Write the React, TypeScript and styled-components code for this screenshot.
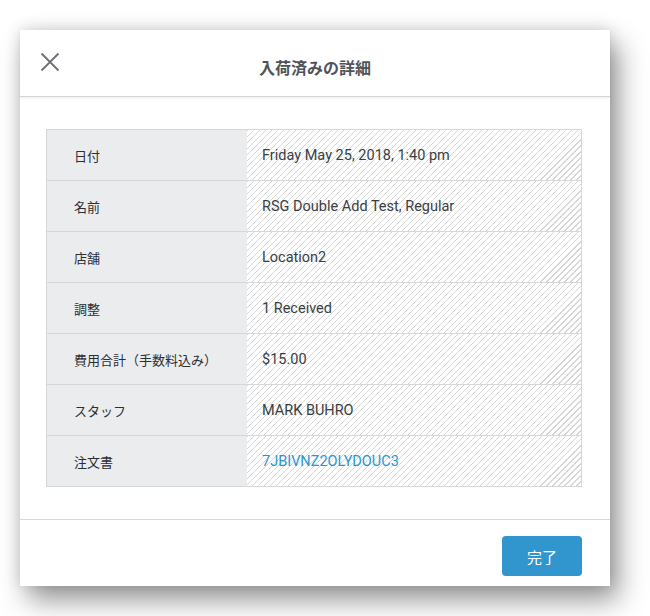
import React from "react";
import styled, { createGlobalStyle } from "styled-components";

const rows = [
    { label: "日付", value: "Friday May 25, 2018, 1:40 pm" },
    { label: "名前", value: "RSG Double Add Test, Regular" },
    { label: "店舗", value: "Location2" },
    { label: "調整", value: "1 Received" },
    { label: "費用合計（手数料込み）", value: "$15.00" },
    { label: "スタッフ", value: "MARK BUHRO" },
    { label: "注文書", value: "7JBIVNZ2OLYDOUC3", link: true },
];

const App = () => {
    return (
        <>
            <GlobalStyle/>
            <Page>
                <Modal>
                    <Header>
                        <CloseButton aria-label="close">
                            <svg width="20" height="20" viewBox="0 0 20 20">
                                <path d="M1.5 1.5 L18.5 18.5 M18.5 1.5 L1.5 18.5" stroke="#6b6f75" strokeWidth="1.8" fill="none"/>
                            </svg>
                        </CloseButton>
                        <Title>入荷済みの詳細</Title>
                    </Header>
                    <Body>
                        <Table>
                            {rows.map((row, i) => (
                                <Row key={row.label} last={i === rows.length - 1}>
                                    <Label>{row.label}</Label>
                                    <Value link={row.link}>{row.value}</Value>
                                </Row>
                            ))}
                        </Table>
                    </Body>
                    <Footer>
                        <DoneButton>完了</DoneButton>
                    </Footer>
                </Modal>
            </Page>
        </>
    )
};
export default App;

const GlobalStyle = createGlobalStyle`
  body {
    margin: 0;
    background: #ffffff;
    font-family: Roboto, "Noto Sans CJK JP", sans-serif;
  }
`;
const Page = styled.div`
    width: 650px;
    height: 616px;
    padding: 30px 0 0 20px;
    box-sizing: border-box;
`;
const Modal = styled.div`
    width: 590px;
    height: 556px;
    background: #fff;
    display: flex;
    flex-direction: column;
    box-shadow: 8px 14px 26px rgba(0, 0, 0, 0.42), 0 -2px 14px rgba(0, 0, 0, 0.12);
`;
const Header = styled.div`
    height: 67px;
    box-sizing: border-box;
    border-bottom: 1px solid #d3d5d8;
    box-shadow: 0 1px 2px rgba(0, 0, 0, 0.08);
    display: flex;
    align-items: center;
    justify-content: center;
    position: relative;
`;
const CloseButton = styled.button`
    position: absolute;
    left: 20px;
    top: 22px;
    width: 20px;
    height: 20px;
    padding: 0;
    border: none;
    background: none;
    display: flex;
`;
const Title = styled.div`
    font-family: "Noto Sans CJK JP", sans-serif;
    font-size: 16px;
    font-weight: 700;
    color: #4f545a;
    margin-top: 8px;
`;
const Body = styled.div`
    flex: 1;
    padding: 32px 28px 0 26px;
    border-bottom: 1px solid #d8dadd;
`;
const Table = styled.div`
    border: 1px solid #d5d7da;
`;
const Row = styled.div<{ last?: boolean }>`
    display: grid;
    grid-template-columns: 200px 1fr;
    height: 50px;
    border-bottom: ${p => p.last ? "none" : "1px solid #d5d7da"};
`;
const Label = styled.div`
    background: #ebecee;
    display: flex;
    align-items: center;
    padding-left: 27px;
    font-family: "Noto Sans CJK JP", sans-serif;
    font-size: 13px;
    color: #2b2e33;
`;
const Value = styled.div<{ link?: boolean }>`
    display: flex;
    align-items: center;
    padding-left: 15px;
    font-family: Roboto, "Noto Sans CJK JP", sans-serif;
    font-size: 14.5px;
    color: ${p => p.link ? "#2d96d1" : "#3a3e43"};
    background: repeating-linear-gradient(135deg, #d6d6d6 0 1px, #ffffff 1px 4.25px);
`;
const Footer = styled.div`
    height: 66px;
    display: flex;
    justify-content: flex-end;
    align-items: flex-start;
    padding: 16px 28px 0 0;
    box-sizing: border-box;
`;
const DoneButton = styled.button`
    width: 80px;
    height: 40px;
    border: none;
    border-radius: 4px;
    background: #3196cd;
    color: #fff;
    font-family: "Noto Sans CJK JP", sans-serif;
    font-size: 15px;
`;
